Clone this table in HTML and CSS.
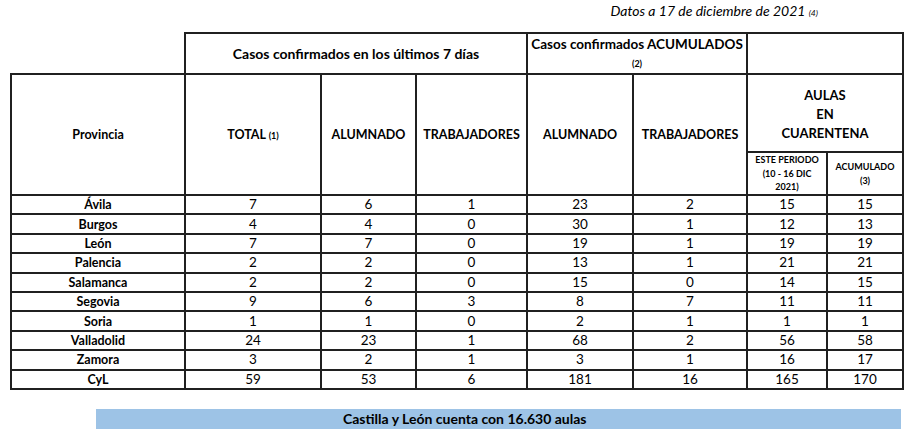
FILE: index.html
```html
<!DOCTYPE html>
<html lang="es">
<head>
<meta charset="utf-8">
<title>Casos confirmados</title>
<link rel="stylesheet" href="styles.css">
</head>
<body>
<div class="page">
  <p class="note">Datos a 17 de diciembre de 2021 <span class="ref">(4)</span></p>
  <table class="grid">
    <colgroup>
      <col class="c1"><col class="c2"><col class="c3"><col class="c4"><col class="c5"><col class="c6"><col class="c7"><col class="c8">
    </colgroup>
    <tr class="r1">
      <td class="blank"></td>
      <th colspan="3" class="top">Casos confirmados en los últimos 7 días</th>
      <th colspan="2" class="acc">Casos confirmados ACUMULADOS<br><span class="ref">(2)</span></th>
      <th colspan="2"></th>
    </tr>
    <tr class="r2">
      <th rowspan="2">Provincia</th>
      <th rowspan="2">TOTAL <span class="ref">(1)</span></th>
      <th rowspan="2">ALUMNADO</th>
      <th rowspan="2">TRABAJADORES</th>
      <th rowspan="2">ALUMNADO</th>
      <th rowspan="2">TRABAJADORES</th>
      <th colspan="2" class="aulas">AULAS<br>EN<br>CUARENTENA</th>
    </tr>
    <tr class="r3">
      <th class="sub">ESTE PERIODO<br>(10 - 16 DIC<br>2021)</th>
      <th class="sub">ACUMULADO<br>(3)</th>
    </tr>
    <tr><th>Ávila</th><td>7</td><td>6</td><td>1</td><td>23</td><td>2</td><td>15</td><td>15</td></tr>
    <tr><th>Burgos</th><td>4</td><td>4</td><td>0</td><td>30</td><td>1</td><td>12</td><td>13</td></tr>
    <tr><th>León</th><td>7</td><td>7</td><td>0</td><td>19</td><td>1</td><td>19</td><td>19</td></tr>
    <tr><th>Palencia</th><td>2</td><td>2</td><td>0</td><td>13</td><td>1</td><td>21</td><td>21</td></tr>
    <tr><th>Salamanca</th><td>2</td><td>2</td><td>0</td><td>15</td><td>0</td><td>14</td><td>15</td></tr>
    <tr><th>Segovia</th><td>9</td><td>6</td><td>3</td><td>8</td><td>7</td><td>11</td><td>11</td></tr>
    <tr><th>Soria</th><td>1</td><td>1</td><td>0</td><td>2</td><td>1</td><td>1</td><td>1</td></tr>
    <tr><th>Valladolid</th><td>24</td><td>23</td><td>1</td><td>68</td><td>2</td><td>56</td><td>58</td></tr>
    <tr><th>Zamora</th><td>3</td><td>2</td><td>1</td><td>3</td><td>1</td><td>16</td><td>17</td></tr>
    <tr><th>CyL</th><td>59</td><td>53</td><td>6</td><td>181</td><td>16</td><td>165</td><td>170</td></tr>
  </table>
  <div class="bar">Castilla y León cuenta con 16.630 aulas</div>
</div>
</body>
</html>
```
FILE: styles.css
```css
html, body {
  margin: 0;
  padding: 0;
  background: #ffffff;
}
body {
  font-family: Lato, "Open Sans", "Liberation Sans", sans-serif;
  color: #000;
}
.page {
  width: 912px;
  height: 438px;
  padding: 0 0 0 10px;
  box-sizing: border-box;
}
.note {
  margin: 0;
  padding: 2px 94px 0 0;
  height: 32px;
  box-sizing: border-box;
  text-align: right;
  font-style: italic;
  font-size: 14px;
  line-height: 17px;
}
.note .ref {
  font-size: 8.5px;
}
.grid {
  border-collapse: collapse;
  table-layout: fixed;
  width: 892px;
}
.c1 { width: 174px; }
.c2 { width: 136px; }
.c3 { width: 95px; }
.c4 { width: 111px; }
.c5 { width: 106px; }
.c6 { width: 114px; }
.c7 { width: 80px; }
.c8 { width: 76px; }
.grid th, .grid td {
  border: 2px solid #202020;
  padding: 0;
  text-align: center;
  vertical-align: middle;
  font-size: 12.5px;
  line-height: 17px;
}
.grid th { font-weight: 700; }
.grid td { font-weight: 400; font-size: 13.5px; }
.grid .blank {
  border-top: none;
  border-left: none;
}
.grid .ref {
  font-size: 9px;
}
.grid .top { font-size: 14px; }
.grid .acc { font-size: 13.5px; line-height: 18px; padding-top: 1px; }
.grid .aulas { font-size: 13px; line-height: 19px; padding-top: 2px; }
.grid .sub {
  font-size: 9px;
  line-height: 13.5px;
}
.grid tr { height: 19.4px; }
.grid tr.r1 { height: 38px; }
.grid tr.r2 { height: 78px; }
.grid tr.r3 { height: 43px; }
.bar {
  margin: 19px 0 0 86px;
  width: 805px;
  height: 20px;
  box-sizing: border-box;
  background: #9dc3e6;
  padding-left: 247px;
  font-weight: 700;
  font-size: 14px;
  line-height: 20px;
}
```
